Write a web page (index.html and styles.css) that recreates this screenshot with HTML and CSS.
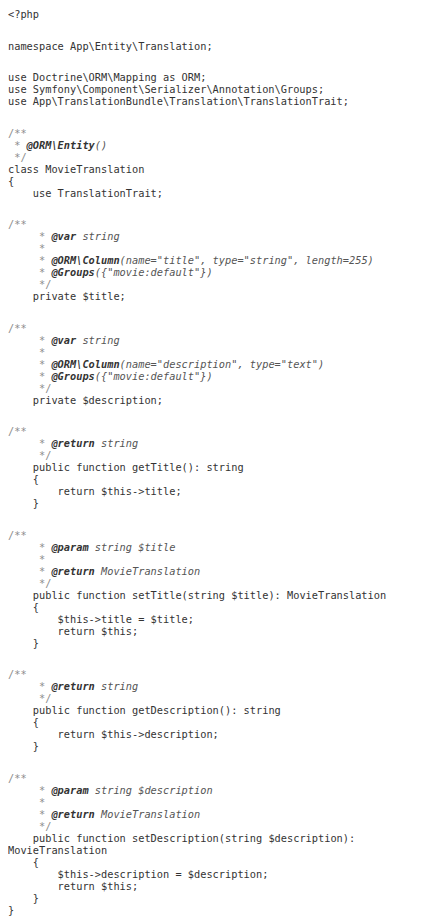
FILE: index.html
```html
<!DOCTYPE html>
<html>
<head>
<meta charset="utf-8">
<link rel="stylesheet" href="styles.css">
</head>
<body>
<div class="code">
<div class="ln">&lt;?php</div>
<div class="blank"></div>
<div class="ln">namespace App\Entity\Translation;</div>
<div class="blank"></div>
<div class="ln">use Doctrine\ORM\Mapping as ORM;</div>
<div class="ln">use Symfony\Component\Serializer\Annotation\Groups;</div>
<div class="ln">use App\TranslationBundle\Translation\TranslationTrait;</div>
<div class="blank"></div>
<div class="ln"><span class="cm">/**</span></div>
<div class="ln"><span class="cm"> * </span><span class="tag">@ORM\Entity</span><span class="ct">()</span></div>
<div class="ln"><span class="cm"> */</span></div>
<div class="ln">class MovieTranslation</div>
<div class="ln">{</div>
<div class="ln">    use TranslationTrait;</div>
<div class="blank"></div>
<div class="ln"><span class="cm">/**</span></div>
<div class="ln"><span class="cm">     * </span><span class="tag">@var</span><span class="ct"> string</span></div>
<div class="ln"><span class="cm">     *</span></div>
<div class="ln"><span class="cm">     * </span><span class="tag">@ORM\Column</span><span class="ct">(name="title", type="string", length=255)</span></div>
<div class="ln"><span class="cm">     * </span><span class="tag">@Groups</span><span class="ct">({"movie:default"})</span></div>
<div class="ln"><span class="cm">     */</span></div>
<div class="ln">    private $title;</div>
<div class="blank"></div>
<div class="ln"><span class="cm">/**</span></div>
<div class="ln"><span class="cm">     * </span><span class="tag">@var</span><span class="ct"> string</span></div>
<div class="ln"><span class="cm">     *</span></div>
<div class="ln"><span class="cm">     * </span><span class="tag">@ORM\Column</span><span class="ct">(name="description", type="text")</span></div>
<div class="ln"><span class="cm">     * </span><span class="tag">@Groups</span><span class="ct">({"movie:default"})</span></div>
<div class="ln"><span class="cm">     */</span></div>
<div class="ln">    private $description;</div>
<div class="blank"></div>
<div class="ln"><span class="cm">/**</span></div>
<div class="ln"><span class="cm">     * </span><span class="tag">@return</span><span class="ct"> string</span></div>
<div class="ln"><span class="cm">     */</span></div>
<div class="ln">    public function getTitle(): string</div>
<div class="ln">    {</div>
<div class="ln">        return $this-&gt;title;</div>
<div class="ln">    }</div>
<div class="blank"></div>
<div class="ln"><span class="cm">/**</span></div>
<div class="ln"><span class="cm">     * </span><span class="tag">@param</span><span class="ct"> string $title</span></div>
<div class="ln"><span class="cm">     *</span></div>
<div class="ln"><span class="cm">     * </span><span class="tag">@return</span><span class="ct"> MovieTranslation</span></div>
<div class="ln"><span class="cm">     */</span></div>
<div class="ln">    public function setTitle(string $title): MovieTranslation</div>
<div class="ln">    {</div>
<div class="ln">        $this-&gt;title = $title;</div>
<div class="ln">        return $this;</div>
<div class="ln">    }</div>
<div class="blank"></div>
<div class="ln"><span class="cm">/**</span></div>
<div class="ln"><span class="cm">     * </span><span class="tag">@return</span><span class="ct"> string</span></div>
<div class="ln"><span class="cm">     */</span></div>
<div class="ln">    public function getDescription(): string</div>
<div class="ln">    {</div>
<div class="ln">        return $this-&gt;description;</div>
<div class="ln">    }</div>
<div class="blank"></div>
<div class="ln"><span class="cm">/**</span></div>
<div class="ln"><span class="cm">     * </span><span class="tag">@param</span><span class="ct"> string $description</span></div>
<div class="ln"><span class="cm">     *</span></div>
<div class="ln"><span class="cm">     * </span><span class="tag">@return</span><span class="ct"> MovieTranslation</span></div>
<div class="ln"><span class="cm">     */</span></div>
<div class="ln">    public function setDescription(string $description): MovieTranslation</div>
<div class="ln">    {</div>
<div class="ln">        $this-&gt;description = $description;</div>
<div class="ln">        return $this;</div>
<div class="ln">    }</div>
<div class="ln">}</div>
</div>
</body>
</html>
```
FILE: styles.css
```css
html, body {
  background: #ffffff;
}
body {
  margin: 8px;
}
.code {
  font-family: "DejaVu Sans Mono", monospace;
  font-size: 10.3px;
  line-height: 12px;
  color: #333333;
}
.ln {
  white-space: pre-wrap;
  min-height: 12px;
}
.blank {
  height: 19.5px;
}
.cm {
  color: #8c8c8c;
}
.tag {
  font-weight: bold;
  font-style: italic;
  color: #333333;
}
.ct {
  font-style: italic;
  color: #555555;
}
```
